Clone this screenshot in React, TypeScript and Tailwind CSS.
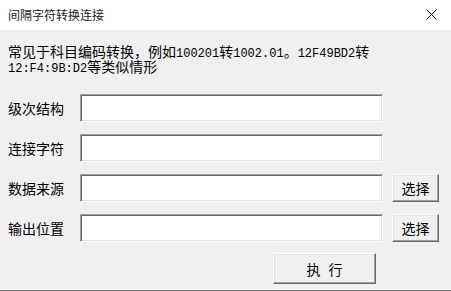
import React from "react";

const cjk = { fontFamily: '"Noto Sans CJK SC", "Noto Sans", sans-serif' };

function M({ children }: { children: React.ReactNode }) {
  return (
    <span className="text-[12px] leading-[15px] align-baseline" style={{ fontFamily: '"Liberation Mono", monospace' }}>
      {children}
    </span>
  );
}

function Field({ label, withButton }: { label: string; withButton?: boolean }) {
  return (
    <div className="flex items-center h-[28px]">
      <div className="w-[72px] text-[14px] text-black leading-none">{label}</div>
      <div className="w-[303px] h-[28px] bg-white border border-t-[#a0a0a0] border-l-[#a0a0a0] border-r-white border-b-white shadow-[inset_1px_1px_0_#696969,inset_-1px_-1px_0_#e3e3e3]" />
      {withButton && (
        <button className="ml-[9px] w-[47px] h-[28px] bg-[#f0f0f0] border border-t-white border-l-white border-r-[#696969] border-b-[#696969] shadow-[inset_-1px_-1px_0_#a0a0a0,inset_1px_1px_0_#e3e3e3] text-[14px] text-black leading-none">
          选择
        </button>
      )}
    </div>
  );
}

export default function App() {
  return (
    <div className="w-[451px] h-[291px] flex flex-col bg-[#f0f0f0] overflow-hidden" style={cjk}>
      <div className="h-[30px] shrink-0 bg-white flex items-center justify-between pl-[8px] pr-[10px]">
        <span className="text-[12px] text-[#1a1a1a] leading-none">间隔字符转换连接</span>
        <svg width="11" height="11" viewBox="0 0 11 11" className="mr-[4px] mb-[2px]">
          <path d="M0.5 0.5 L10.5 10.5 M10.5 0.5 L0.5 10.5" stroke="#111" strokeWidth="1" />
        </svg>
      </div>
      <div className="flex-1 flex flex-col pl-[8px] pt-[14px] border-b border-b-[#7a7a7a]">
        <div className="h-[30px] flex flex-col text-[14px] text-black whitespace-nowrap">
          <div className="h-[15px] leading-[15px] overflow-visible">
            常见于科目编码转换，例如<M>100201</M>转<M>1002.01</M>。<M>12F49BD2</M>转
          </div>
          <div className="h-[15px] leading-[15px] overflow-visible">
            <M>12:F4:9B:D2</M>等类似情形
          </div>
        </div>
        <div className="mt-[20px] flex flex-col gap-[12px]">
          <Field label="级次结构" />
          <Field label="连接字符" />
          <Field label="数据来源" withButton />
          <Field label="输出位置" withButton />
        </div>
        <div className="mt-[11px] flex">
          <button className="ml-[265px] w-[103px] h-[31px] bg-[#f0f0f0] border border-t-white border-l-white border-r-[#696969] border-b-[#696969] shadow-[inset_-1px_-1px_0_#a0a0a0,inset_1px_1px_0_#e3e3e3] text-[14px] text-black leading-none flex items-center justify-center gap-[8px]">
            <span>执</span>
            <span>行</span>
          </button>
        </div>
      </div>
    </div>
  );
}
